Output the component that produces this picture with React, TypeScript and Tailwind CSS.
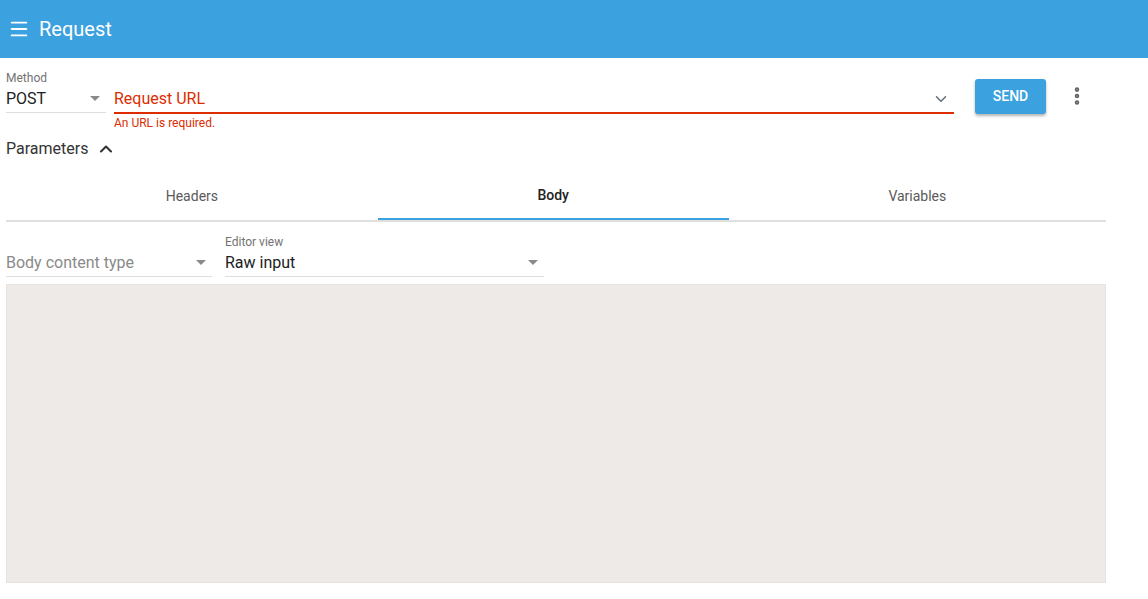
import { ChevronDown, ChevronUp, EllipsisVertical, Menu } from "lucide-react";

function Caret() {
  return (
    <svg width="10" height="5" viewBox="0 0 10 5" className="shrink-0">
      <path d="M0 0 L10 0 L5 5 Z" fill="#8a8a8a" />
    </svg>
  );
}

export default function App() {
  const tabs = ["Headers", "Body", "Variables"];
  const active = 1;

  return (
    <div className="min-h-screen bg-white font-['Roboto',sans-serif] text-[#212121]">
      {/* Toolbar */}
      <div className="h-[58px] bg-[#3ba1df] flex items-center pl-[8px] text-white">
        <Menu size={22} strokeWidth={2} />
        <span className="ml-[9px] text-[20px] font-normal">Request</span>
      </div>

      <div className="pl-[6px] w-[1106px]">
        {/* URL row */}
        <div className="flex items-start pt-[13px]">
          <div className="w-[100px]">
            <div className="text-[12px] leading-[14px] text-[#737373]">Method</div>
            <div className="flex items-center justify-between h-[28px] border-b border-[#dedede] pr-[6px]">
              <span className="text-[16px]">POST</span>
              <Caret />
            </div>
          </div>
          <div className="ml-[8px] w-[840px] pt-[15px]">
            <div className="flex items-center justify-between h-[28px] border-b-2 border-[#dd2c00] pr-[4px]">
              <span className="text-[16px] text-[#dd2c00]">Request URL</span>
              <ChevronDown size={18} className="text-[#5f6f7a]" />
            </div>
            <div className="text-[12px] leading-[18px] text-[#dd2c00]">An URL is required.</div>
          </div>
          <button className="ml-[21px] mt-[8px] w-[71px] h-[35px] rounded-[3px] bg-[#3ba1df] text-white text-[14px] font-medium shadow-[0_2px_3px_rgba(0,0,0,0.3)]">
            SEND
          </button>
          <EllipsisVertical size={22} strokeWidth={3} className="ml-[20px] mt-[14px] text-[#666]" />
        </div>

        {/* Parameters */}
        <div className="flex items-center mt-[5px] h-[24px]">
          <span className="text-[16px] text-[#333]">Parameters</span>
          <ChevronUp size={20} strokeWidth={2.5} className="ml-[8px] text-[#333]" />
        </div>

        {/* Tabs */}
        <div className="flex mt-[11px] border-b-2 border-[#e0e0e0]">
          {tabs.map((t, i) => (
            <div
              key={t}
              className={
                i === active
                  ? "flex-auto h-[48px] flex items-center justify-center text-[14px] font-medium text-[#222] border-b-2 border-[#3ba1df] -mb-[2px]"
                  : "flex-auto h-[48px] flex items-center justify-center text-[14px] text-[#5a5a5a]"
              }
            >
              {t}
            </div>
          ))}
        </div>

        {/* Body options */}
        <div className="flex items-end mt-[13px]">
          <div className="w-[206px] flex items-center justify-between h-[28px] border-b border-[#dedede] pr-[6px]">
            <span className="text-[16px] text-[#8a8a8a]">Body content type</span>
            <Caret />
          </div>
          <div className="ml-[13px] w-[319px]">
            <div className="text-[12px] leading-[14px] text-[#737373]">Editor view</div>
            <div className="flex items-center justify-between h-[28px] border-b border-[#dedede] pr-[6px]">
              <span className="text-[16px]">Raw input</span>
              <Caret />
            </div>
          </div>
        </div>

        {/* Editor */}
        <div className="mt-[7px] h-[299px] bg-[#eeeae7] border border-[#e6e2df]" />
      </div>
    </div>
  );
}
